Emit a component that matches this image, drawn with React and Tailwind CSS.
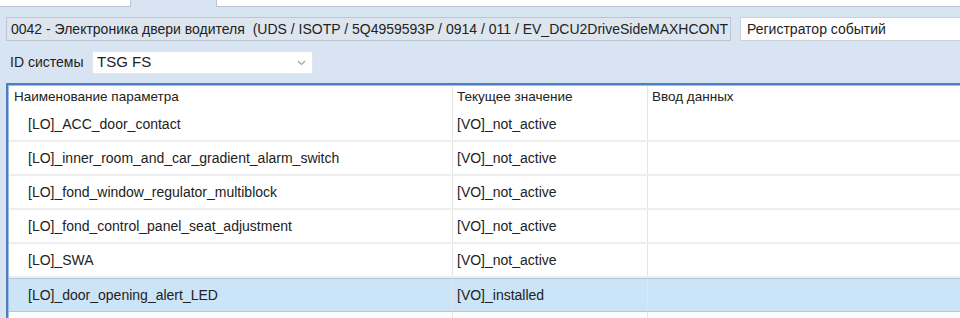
import React from "react";

const rows = [
  ["[LO]_ACC_door_contact", "[VO]_not_active"],
  ["[LO]_inner_room_and_car_gradient_alarm_switch", "[VO]_not_active"],
  ["[LO]_fond_window_regulator_multiblock", "[VO]_not_active"],
  ["[LO]_fond_control_panel_seat_adjustment", "[VO]_not_active"],
  ["[LO]_SWA", "[VO]_not_active"],
  ["[LO]_door_opening_alert_LED", "[VO]_installed", true],
];

export default function App() {
  return (
    <div
      className="w-[960px] h-[318px] overflow-hidden bg-[#d8e4f2] text-[14px] text-[#222]"
      style={{ fontFamily: '"Liberation Sans", Arial, sans-serif' }}
    >
      {/* tab strip */}
      <div className="flex h-[7px]">
        <div className="w-[131px] bg-white border-r border-b border-[#b9c4d2]" />
        <div className="w-[85px]" />
        <div className="flex-1 bg-white border-l border-b border-[#b9c4d2]" />
      </div>

      {/* module info */}
      <div className="flex items-center gap-[9px] pl-[6px] mt-[10px]">
        <div className="w-[725px] h-[24px] flex items-center px-[4px] bg-[#dde5ef] border border-[#bcc6d3] overflow-hidden whitespace-nowrap">
          0042 - Электроника двери водителя&nbsp;&nbsp;(UDS / ISOTP / 5Q4959593P / 0914 / 011 / EV_DCU2DriveSideMAXHCONT
        </div>
        <div className="flex-1 h-[24px] flex items-center px-[6px] bg-white border-y border-l border-[#c9d2dd] whitespace-nowrap">
          Регистратор событий
        </div>
      </div>

      {/* system id */}
      <div className="flex items-center mt-[10px] pl-[10px] h-[23px]">
        <span className="w-[82px]">ID системы</span>
        <div className="w-[221px] h-[23px] flex items-center justify-between pl-[4px] pr-[6px] bg-white border border-[#e1e6ec]">
          <span className="text-[15px]">TSG FS</span>
          <svg width="9" height="6" viewBox="0 0 9 6" fill="none">
            <path d="M1 1l3.5 3.5L8 1" stroke="#9aa2ab" strokeWidth="1.2" />
          </svg>
        </div>
      </div>

      {/* table */}
      <div className="mt-[9px] ml-[6px] border-t-2 border-l-2 border-[#4b7fc1] bg-white h-[240px]">
        <div className="border-t border-l border-[#9fbde0] h-full">
          <div className="flex h-[22px] items-center text-[13.5px]">
            <div className="w-[444px] pl-[5px] border-r border-[#e4e4e4] h-full flex items-center">
              Наименование параметра
            </div>
            <div className="w-[195px] pl-[4px] border-r border-[#e4e4e4] h-full flex items-center">
              Текущее значение
            </div>
            <div className="flex-1 pl-[4px]">Ввод данных</div>
          </div>
          {rows.map(([name, value, sel], i) => (
            <div
              key={i}
              className={
                sel
                  ? "flex h-[34px] items-center bg-[#cce4f7] border-t border-b border-[#b3c9dd]"
                  : "flex h-[34px] items-center border-b-2 border-[#eeeeee]"
              }
            >
              <div className="w-[444px] pl-[19px] h-full flex items-center border-r border-[#e4e4e4]">
                {name}
              </div>
              <div className="w-[195px] pl-[4px] h-full flex items-center border-r border-[#e4e4e4]">
                {value}
              </div>
              <div className="flex-1" />
            </div>
          ))}
          <div className="flex h-[20px]">
            <div className="w-[444px] border-r border-[#e4e4e4]" />
            <div className="w-[195px] border-r border-[#e4e4e4]" />
          </div>
        </div>
      </div>
    </div>
  );
}
